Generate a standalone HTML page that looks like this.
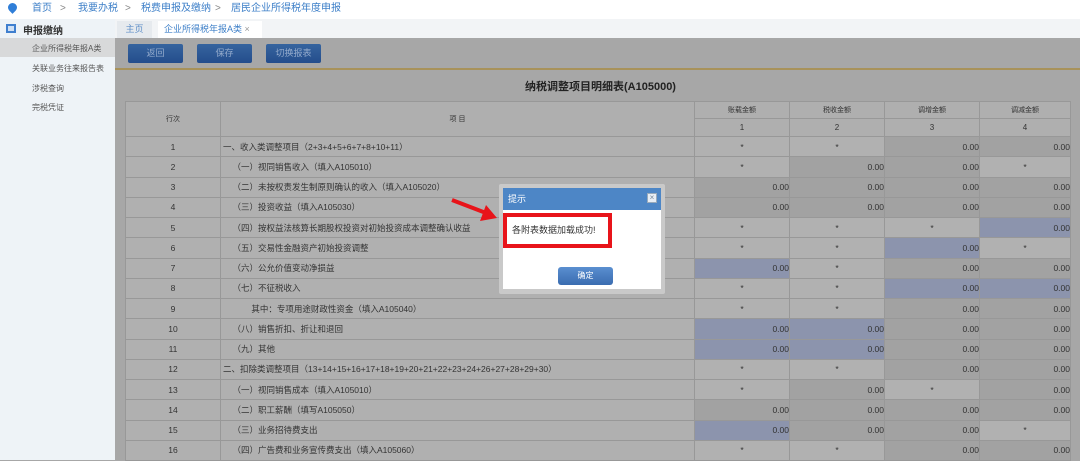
<!DOCTYPE html>
<html><head><meta charset="utf-8"><style>
*{margin:0;padding:0;box-sizing:border-box}
body{width:1080px;height:460px;overflow:hidden;position:relative;background:#a7a7a7;font-family:"Liberation Sans","Noto Sans CJK SC",sans-serif;font-size:8px;color:#333}
.a{position:absolute}
.top{left:0;top:0;width:1080px;height:19px;background:#fff;color:#3d7fc8;font-size:10px;line-height:17px}
.side{left:0;top:19px;width:115px;height:441px;background:#eef3f7}
.tabs{left:115px;top:19px;width:965px;height:19px;background:#f2f4f6}
.btn{top:44px;width:55px;height:19px;background:linear-gradient(#36649f,#244d8c);border-radius:2px;color:#94abcc;font-size:9px;text-align:center;line-height:19px}
table{position:absolute;left:125px;top:101px;border-collapse:collapse;table-layout:fixed}
td{border:1px solid #989898;height:20.25px;background:#b0b0b0;font-size:8.5px;color:#333;text-align:center;white-space:nowrap;overflow:hidden;padding:0}
td.l{text-align:left;padding-left:2px}
td.D{background:#a2a2a2;text-align:right}
td.B{background:#8c94ad;text-align:right}
td.S{background:#b1b1b1}
th{border:1px solid #989898;background:#afafaf;font-weight:normal;font-size:7px;color:#333}
</style></head><body>
<div class="a top"><span class="a" style="left:8px;top:3px;width:9px;height:9px;border-radius:50% 50% 50% 0;transform:rotate(-45deg);background:#2f7ed8"></span><span class="a" style="left:32px">首页</span><span class="a" style="left:60px;color:#888">&gt;</span><span class="a" style="left:78px">我要办税</span><span class="a" style="left:125px;color:#888">&gt;</span><span class="a" style="left:141px">税费申报及缴纳</span><span class="a" style="left:215px;color:#888">&gt;</span><span class="a" style="left:231px">居民企业所得税年度申报</span></div>
<div class="a side">
<div class="a" style="left:6px;top:5px;width:10px;height:9px;border:2px solid #3f7fcf;background:#cfe0f4"></div>
<div class="a" style="left:23px;top:3px;font-size:10px;font-weight:bold;color:#333">申报缴纳</div>
<div class="a" style="left:0;top:19px;width:115px;height:19px;background:#d8d9da"></div>
<div class="a" style="left:32px;top:24px;color:#555">企业所得税年报A类</div>
<div class="a" style="left:32px;top:44px;color:#555">关联业务往来报告表</div>
<div class="a" style="left:32px;top:64px;color:#555">涉税查询</div>
<div class="a" style="left:32px;top:83px;color:#555">完税凭证</div>
</div>
<div class="a tabs"><div class="a" style="left:2px;top:2px;width:35px;height:17px;background:#e6eaee;color:#5f8fc8;font-size:9px;text-align:center;line-height:17px">主页</div><div class="a" style="left:43px;top:2px;width:104px;height:17px;background:#fff;color:#3d7fc8;font-size:9px;line-height:17px;padding-left:6px">企业所得税年报A类 <span style="color:#999">×</span></div></div>
<div class="a btn" style="left:128px">返回</div>
<div class="a btn" style="left:197px">保存</div>
<div class="a btn" style="left:266px">切换报表</div>
<div class="a" style="left:115px;top:68px;width:965px;height:2px;background:#a8925a"></div>
<div class="a" style="left:525px;top:78px;font-size:11px;font-weight:bold;color:#222">纳税调整项目明细表(A105000)</div>
<table>
<colgroup><col style="width:95px"><col style="width:474px"><col style="width:95px"><col style="width:95px"><col style="width:95px"><col style="width:91px"></colgroup>
<tr style="height:17px"><th rowspan="2">行次</th><th rowspan="2">项 目</th><th>账载金额</th><th>税收金额</th><th>调增金额</th><th>调减金额</th></tr>
<tr style="height:18px"><th style="font-size:8px">1</th><th style="font-size:8px">2</th><th style="font-size:8px">3</th><th style="font-size:8px">4</th></tr>
<tr><td>1</td><td class="l">一、收入类调整项目（2+3+4+5+6+7+8+10+11）</td><td class="S">*</td><td class="S">*</td><td class="D">0.00</td><td class="D">0.00</td></tr>
<tr><td>2</td><td class="l">&nbsp;&nbsp;&nbsp;&nbsp;（一）视同销售收入（填入A105010）</td><td class="S">*</td><td class="D">0.00</td><td class="D">0.00</td><td class="S">*</td></tr>
<tr><td>3</td><td class="l">&nbsp;&nbsp;&nbsp;&nbsp;（二）未按权责发生制原则确认的收入（填入A105020）</td><td class="D">0.00</td><td class="D">0.00</td><td class="D">0.00</td><td class="D">0.00</td></tr>
<tr><td>4</td><td class="l">&nbsp;&nbsp;&nbsp;&nbsp;（三）投资收益（填入A105030）</td><td class="D">0.00</td><td class="D">0.00</td><td class="D">0.00</td><td class="D">0.00</td></tr>
<tr><td>5</td><td class="l">&nbsp;&nbsp;&nbsp;&nbsp;（四）按权益法核算长期股权投资对初始投资成本调整确认收益</td><td class="S">*</td><td class="S">*</td><td class="S">*</td><td class="B">0.00</td></tr>
<tr><td>6</td><td class="l">&nbsp;&nbsp;&nbsp;&nbsp;（五）交易性金融资产初始投资调整</td><td class="S">*</td><td class="S">*</td><td class="B">0.00</td><td class="S">*</td></tr>
<tr><td>7</td><td class="l">&nbsp;&nbsp;&nbsp;&nbsp;（六）公允价值变动净损益</td><td class="B">0.00</td><td class="S">*</td><td class="D">0.00</td><td class="D">0.00</td></tr>
<tr><td>8</td><td class="l">&nbsp;&nbsp;&nbsp;&nbsp;（七）不征税收入</td><td class="S">*</td><td class="S">*</td><td class="B">0.00</td><td class="B">0.00</td></tr>
<tr><td>9</td><td class="l">&nbsp;&nbsp;&nbsp;&nbsp;&nbsp;&nbsp;&nbsp;&nbsp;&nbsp;&nbsp;&nbsp;&nbsp;其中：专项用途财政性资金（填入A105040）</td><td class="S">*</td><td class="S">*</td><td class="D">0.00</td><td class="D">0.00</td></tr>
<tr><td>10</td><td class="l">&nbsp;&nbsp;&nbsp;&nbsp;（八）销售折扣、折让和退回</td><td class="B">0.00</td><td class="B">0.00</td><td class="D">0.00</td><td class="D">0.00</td></tr>
<tr><td>11</td><td class="l">&nbsp;&nbsp;&nbsp;&nbsp;（九）其他</td><td class="B">0.00</td><td class="B">0.00</td><td class="D">0.00</td><td class="D">0.00</td></tr>
<tr><td>12</td><td class="l">二、扣除类调整项目（13+14+15+16+17+18+19+20+21+22+23+24+26+27+28+29+30）</td><td class="S">*</td><td class="S">*</td><td class="D">0.00</td><td class="D">0.00</td></tr>
<tr><td>13</td><td class="l">&nbsp;&nbsp;&nbsp;&nbsp;（一）视同销售成本（填入A105010）</td><td class="S">*</td><td class="D">0.00</td><td class="S">*</td><td class="D">0.00</td></tr>
<tr><td>14</td><td class="l">&nbsp;&nbsp;&nbsp;&nbsp;（二）职工薪酬（填写A105050）</td><td class="D">0.00</td><td class="D">0.00</td><td class="D">0.00</td><td class="D">0.00</td></tr>
<tr><td>15</td><td class="l">&nbsp;&nbsp;&nbsp;&nbsp;（三）业务招待费支出</td><td class="B">0.00</td><td class="D">0.00</td><td class="D">0.00</td><td class="S">*</td></tr>
<tr><td>16</td><td class="l">&nbsp;&nbsp;&nbsp;&nbsp;（四）广告费和业务宣传费支出（填入A105060）</td><td class="S">*</td><td class="S">*</td><td class="D">0.00</td><td class="D">0.00</td></tr>
</table>
<div class="a" style="left:499px;top:184px;width:166px;height:110px;background:#c9c9c9;border-radius:2px"></div>
<div class="a" style="left:503px;top:188px;width:158px;height:101px;background:#fff"></div>
<div class="a" style="left:503px;top:188px;width:158px;height:22px;background:#4d86c6;color:#fff;font-size:9px;line-height:22px;padding-left:5px">提示</div>
<div class="a" style="left:647px;top:193px;width:10px;height:10px;background:#e8eef5;border:1px solid #9ab;color:#789;font-size:8px;line-height:8px;text-align:center">×</div>
<div class="a" style="left:503px;top:213px;width:109px;height:35px;border:4px solid #e8141a;font-size:9px;line-height:27px;padding-left:5px;color:#333">各附表数据加载成功!</div>
<div class="a" style="left:558px;top:267px;width:55px;height:18px;background:linear-gradient(#5a8fd0,#3a6cb0);border-radius:3px;color:#fff;font-size:8px;text-align:center;line-height:18px">确定</div>
<svg class="a" style="left:448px;top:195px" width="52" height="30"><line x1="4" y1="5" x2="38" y2="18" stroke="#e8141a" stroke-width="4"/><polygon points="49,23 32,26 38,10" fill="#e8141a"/></svg>
</body></html>
